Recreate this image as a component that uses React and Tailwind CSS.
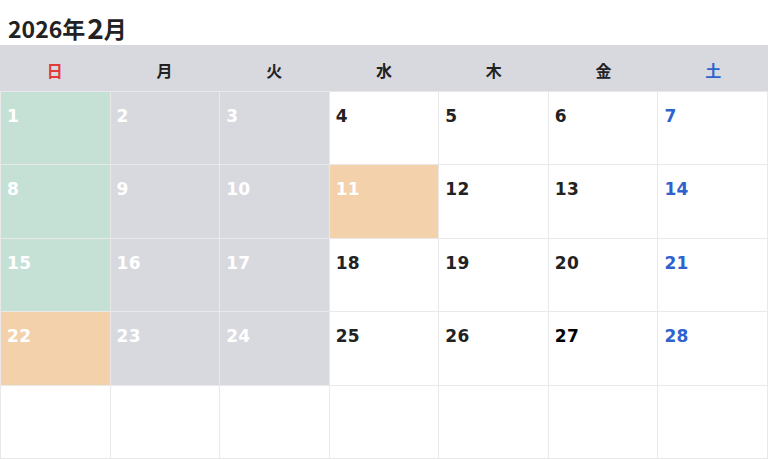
const days = [
  { label: "日", color: "text-[#e03a3a]" },
  { label: "月", color: "text-[#222222]" },
  { label: "火", color: "text-[#222222]" },
  { label: "水", color: "text-[#222222]" },
  { label: "木", color: "text-[#222222]" },
  { label: "金", color: "text-[#222222]" },
  { label: "土", color: "text-[#2d62cf]" },
];

const green = [1, 8, 15];
const orange = [11, 22];
const gray = [2, 3, 9, 10, 16, 17, 23, 24];

function Cell({ day, col }) {
  if (!day) return <div className="bg-white" />;
  let bg = "bg-white";
  let text = col === 6 ? "text-[#2d62cf]" : "text-[#222222]";
  if (green.includes(day)) bg = "bg-[#c5e1d5]";
  if (orange.includes(day)) bg = "bg-[#f3d1aa]";
  if (gray.includes(day)) bg = "bg-[#d8d9de]";
  if (bg !== "bg-white") text = "text-white";
  if (day === 27) text = "text-black";
  return (
    <div className={`${bg} pl-[6px] pt-[12px]`}>
      <span className={`text-[17px] font-bold leading-6 tracking-[0.3px] ${text}`}>{day}</span>
    </div>
  );
}

export default function App() {
  // 2026-02-01 is a Sunday
  const grid = Array.from({ length: 35 }, (_, i) => (i < 28 ? i + 1 : null));

  return (
    <div className="flex h-[460px] w-[768px] flex-col bg-white font-['DejaVu_Sans','Noto_Sans_CJK_JP',sans-serif]">
      <div className="flex h-[45px] items-end px-2 pb-[2px] font-['Noto_Sans_CJK_JP',sans-serif] font-bold leading-none text-[#222222]">
        <span className="pb-[3px] text-[23px]">2026年</span>
        <span className="ml-0.5 pb-[2px] text-[28px]">2</span>
        <span className="pb-[3px] text-[23px]">月</span>
      </div>
      <div className="grid h-[46px] grid-cols-7 bg-[#d8d9de] pt-2">
        {days.map((d) => (
          <div key={d.label} className={`flex items-center justify-center text-base font-bold ${d.color}`}>
            {d.label}
          </div>
        ))}
      </div>
      <div className="grid h-[368px] grid-cols-7 grid-rows-5 gap-px bg-[#e9e9ec] p-px">
        {grid.map((day, i) => (
          <Cell key={i} day={day} col={i % 7} />
        ))}
      </div>
    </div>
  );
}
